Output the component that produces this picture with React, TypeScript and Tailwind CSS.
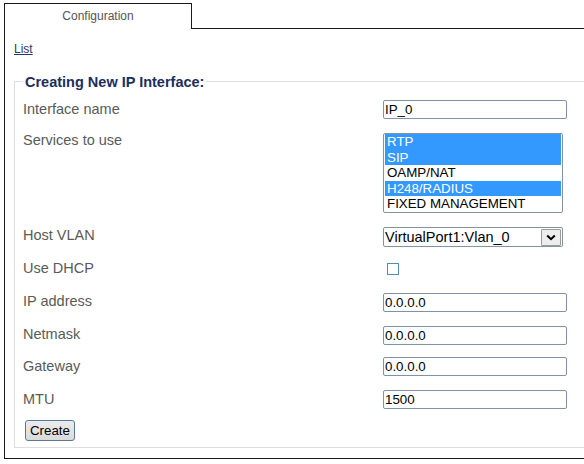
import React from "react";

type Service = { name: string; selected: boolean };

const services: Service[] = [
  { name: "RTP", selected: true },
  { name: "SIP", selected: true },
  { name: "OAMP/NAT", selected: false },
  { name: "H248/RADIUS", selected: true },
  { name: "FIXED MANAGEMENT", selected: false },
];

function TextBox({ value }: { value: string }) {
  return (
    <input
      type="text"
      defaultValue={value}
      className="block w-[184px] h-[19px] border border-[#7f93a8] rounded-[2px] px-[1px] text-[13.33px] leading-[17px] text-black bg-white outline-none"
    />
  );
}

function Row({
  label,
  height,
  children,
}: {
  label: string;
  height: string;
  children: React.ReactNode;
}) {
  return (
    <div className={`flex items-start ${height}`}>
      <div className="w-[360px] pt-[1px] text-[14.5px] leading-[17px] text-[#5a5a5a]">{label}</div>
      <div>{children}</div>
    </div>
  );
}

export default function App() {
  return (
    <div className="w-[584px] h-[464px] overflow-hidden bg-white font-['Liberation_Sans',Arial,sans-serif]">
      {/* tab strip */}
      <div className="flex pt-[3px] pl-[4px] w-[620px]">
        <div className="w-[188px] h-[26px] border-l border-t border-r border-[#1a1a1a] flex items-center justify-center text-[12px] text-[#555] pb-[1px]">
          Configuration
        </div>
        <div className="flex-1 h-[26px] border-b border-[#1a1a1a]" />
      </div>

      {/* panel */}
      <div className="ml-[4px] w-[620px] h-[430px] border-l border-b border-[#1a1a1a] pl-[9px] pt-[13px]">
        <a href="#" className="block w-fit text-[12px] leading-[14px] text-[#1d3a6b] underline">
          List
        </a>

        <div className="mt-[25px] w-[620px] border border-[#dedede] pl-[8px] pb-[6px]">
          <div className="-mt-[8px] w-fit bg-white px-[2px] text-[14.5px] leading-[17px] font-bold text-[#1b2e5c]">
            Creating New IP Interface:
          </div>

          <div className="mt-[9px]">
            <Row label="Interface name" height="h-[31px]">
              <TextBox value="IP_0" />
            </Row>

            <Row label="Services to use" height="h-[95px]">
              <div className="mt-[2px] w-[180px] h-[80px] border border-[#8293a6] rounded-[2px] bg-white px-[1px] overflow-hidden">
                {services.map((s) => (
                  <div
                    key={s.name}
                    className={
                      s.selected
                        ? "h-[15.6px] leading-[15.6px] pl-[2px] text-[13.33px] bg-[#3399ff] text-white"
                        : "h-[15.6px] leading-[15.6px] pl-[2px] text-[13.33px] text-black"
                    }
                  >
                    {s.name}
                  </div>
                ))}
              </div>
            </Row>

            <Row label="Host VLAN" height="h-[33px]">
              <div className="mt-[1px] w-[180px] h-[20px] border border-[#8293a6] rounded-[2px] bg-white flex items-center justify-between pl-[1px] pr-[1px]">
                <span className="text-[14.5px] leading-[17px] text-black">VirtualPort1:Vlan_0</span>
                <span className="w-[20px] h-[17px] border border-[#9a9a9a] rounded-[1px] bg-[#ededed] flex items-center justify-center">
                  <svg width="10" height="7" viewBox="0 0 10 7">
                    <path d="M1.2 1.5 L5 5.2 L8.8 1.5" fill="none" stroke="#000" strokeWidth="2" />
                  </svg>
                </span>
              </div>
            </Row>

            <Row label="Use DHCP" height="h-[33px]">
              <div className="mt-[4px] ml-[4px] w-[12px] h-[12px] border border-[#4c90ab] bg-white" />
            </Row>

            <Row label="IP address" height="h-[32.5px]">
              <div className="mt-[1px]">
                <TextBox value="0.0.0.0" />
              </div>
            </Row>

            <Row label="Netmask" height="h-[32.5px]">
              <div className="mt-[1.5px]">
                <TextBox value="0.0.0.0" />
              </div>
            </Row>

            <Row label="Gateway" height="h-[32.5px]">
              <TextBox value="0.0.0.0" />
            </Row>

            <Row label="MTU" height="h-[30px]">
              <TextBox value="1500" />
            </Row>

            <button
              type="button"
              className="block ml-[2px] w-[50px] h-[21px] border border-[#5c7897] rounded-[3px] bg-gradient-to-b from-[#ececec] to-[#dadada] text-[13.33px] leading-[17px] text-black"
            >
              Create
            </button>
          </div>
        </div>
      </div>
    </div>
  );
}
